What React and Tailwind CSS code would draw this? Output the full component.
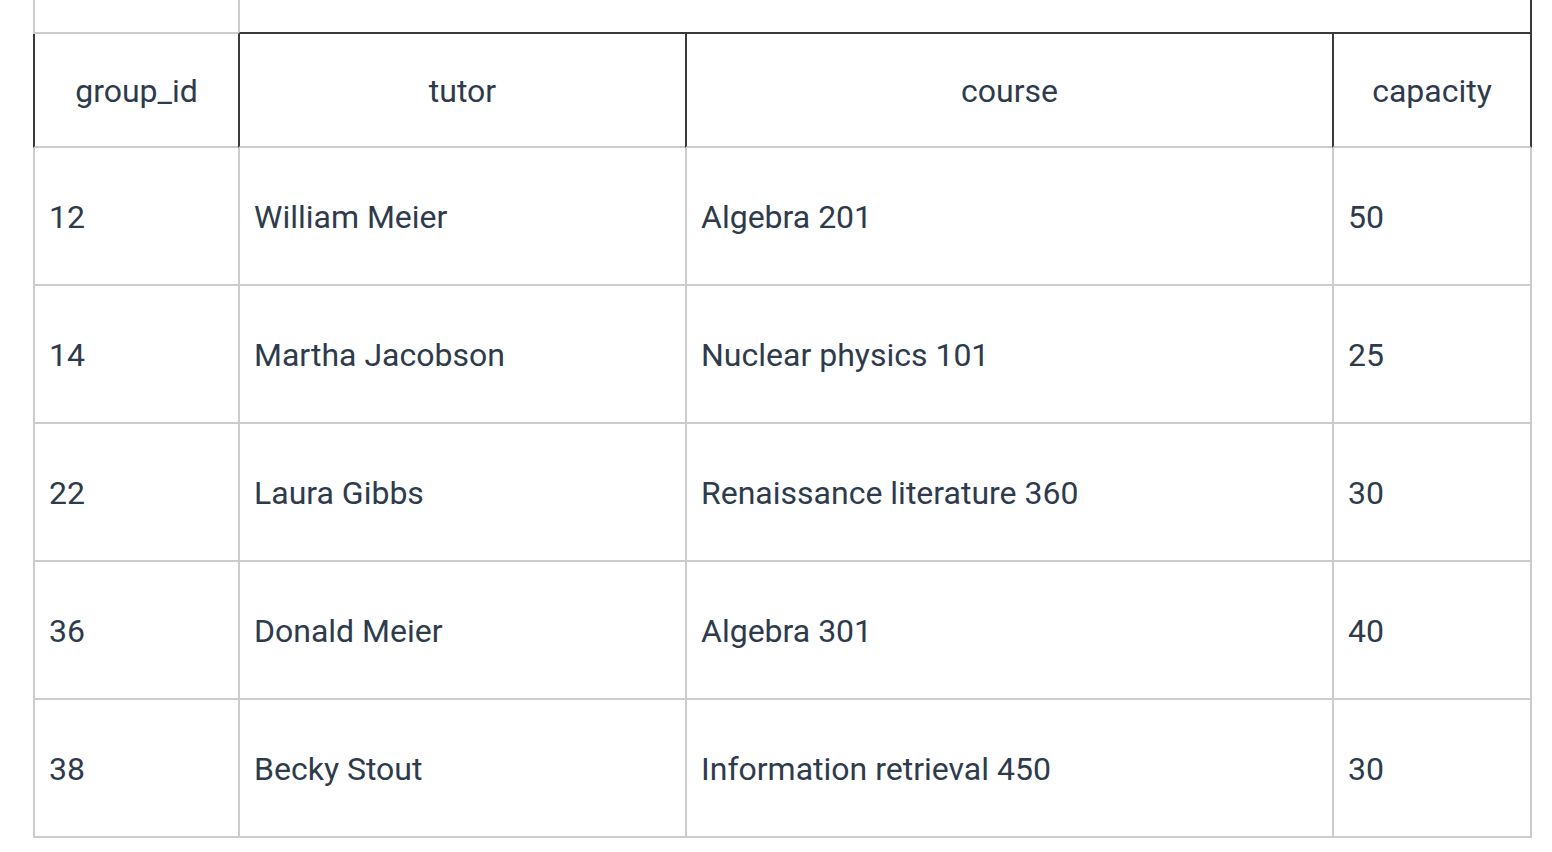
import React from 'react';

const rows = [
  { id: '12', tutor: 'William Meier', course: 'Algebra 201', capacity: '50' },
  { id: '14', tutor: 'Martha Jacobson', course: 'Nuclear physics 101', capacity: '25' },
  { id: '22', tutor: 'Laura Gibbs', course: 'Renaissance literature 360', capacity: '30' },
  { id: '36', tutor: 'Donald Meier', course: 'Algebra 301', capacity: '40' },
  { id: '38', tutor: 'Becky Stout', course: 'Information retrieval 450', capacity: '30' },
];

const headers = ['group_id', 'tutor', 'course', 'capacity'];

export default function App() {
  return (
    <div
      className="min-h-screen bg-white pl-[33px] text-[#2d3b4d]"
      style={{ fontFamily: 'Roboto, "Noto Sans", sans-serif' }}
    >
      <div className="grid w-[1499px] grid-cols-[205px_447px_647px_200px] text-[32px]">
        {/* leftover row from the previous section */}
        <div className="h-[34px] border-l-2 border-b-2 border-[#cccccc]" />
        <div className="col-span-3 h-[34px] border-l-2 border-r-2 border-b-2 border-l-[#cccccc] border-r-[#3a3a3a] border-b-[#3a3a3a]" />

        {/* header */}
        {headers.map((h, i) => (
          <div
            key={h}
            className={`flex h-[114px] items-center justify-center border-l-2 border-b-2 border-l-[#3a3a3a] border-b-[#cccccc] pt-[2px] ${
              i === 3 ? 'border-r-2 border-r-[#3a3a3a]' : ''
            }`}
          >
            {h}
          </div>
        ))}

        {/* body */}
        {rows.map((r) => (
          <React.Fragment key={r.id}>
            <div className="flex h-[138px] items-center border-l-2 border-b-2 border-[#cccccc] pl-[14px] pt-[2px]">{r.id}</div>
            <div className="flex h-[138px] items-center border-l-2 border-b-2 border-[#cccccc] pl-[14px] pt-[2px]">{r.tutor}</div>
            <div className="flex h-[138px] items-center border-l-2 border-b-2 border-[#cccccc] pl-[14px] pt-[2px]">{r.course}</div>
            <div className="flex h-[138px] items-center border-l-2 border-r-2 border-b-2 border-[#cccccc] pl-[14px] pt-[2px]">{r.capacity}</div>
          </React.Fragment>
        ))}
      </div>
    </div>
  );
}
